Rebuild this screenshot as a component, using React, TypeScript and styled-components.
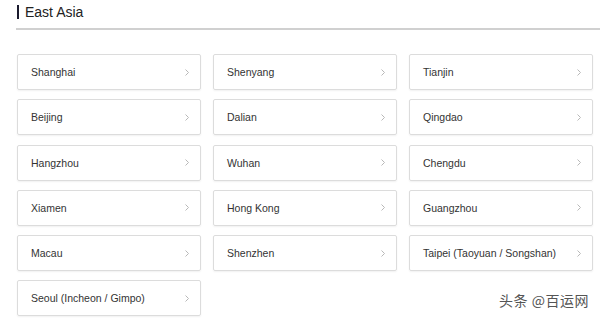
import React from "react";
import styled, { createGlobalStyle } from "styled-components";

const GlobalStyle = createGlobalStyle`
  html, body {
    margin: 0;
    padding: 0;
    background: #ffffff;
    font-family: "Liberation Sans", Arial, sans-serif;
  }
`;

const cities: string[] = [
  "Shanghai",
  "Shenyang",
  "Tianjin",
  "Beijing",
  "Dalian",
  "Qingdao",
  "Hangzhou",
  "Wuhan",
  "Chengdu",
  "Xiamen",
  "Hong Kong",
  "Guangzhou",
  "Macau",
  "Shenzhen",
  "Taipei (Taoyuan / Songshan)",
  "Seoul (Incheon / Gimpo)",
];

const Page = styled.div`
  position: relative;
  width: 600px;
  height: 321px;
  overflow: hidden;
  padding-left: 16px;
  box-sizing: border-box;
`;

const Header = styled.div`
  display: flex;
  align-items: center;
  height: 30px;
  border-bottom: 2px solid #d0d0d0;
  box-sizing: border-box;
`;

const TitleBar = styled.span`
  display: block;
  width: 2px;
  height: 14px;
  margin-left: 1px;
  margin-right: 6px;
  margin-top: -4px;
  background: #1a1a2e;
`;

const Title = styled.h2`
  margin: 0;
  margin-top: -5px;
  font-size: 14px;
  font-weight: normal;
  color: #222;
`;

const Grid = styled.div`
  display: grid;
  grid-template-columns: repeat(3, 184px);
  grid-auto-rows: 36px;
  column-gap: 12px;
  row-gap: 9.25px;
  margin-top: 24px;
  margin-left: 1px;
`;

const Card = styled.a`
  display: flex;
  align-items: center;
  justify-content: space-between;
  padding: 0 11px 0 13px;
  border: 1px solid #dcdcdc;
  border-radius: 2px;
  box-shadow: 0 1px 2px rgba(0, 0, 0, 0.06);
  box-sizing: border-box;
  color: #333;
  font-size: 10.5px;
  text-decoration: none;
`;

const Chevron = styled.svg`
  width: 4px;
  height: 7px;
  flex-shrink: 0;
`;

const Watermark = styled.div`
  position: absolute;
  right: 11px;
  bottom: 11px;
  font-family: "Noto Sans CJK SC", sans-serif;
  font-size: 14px;
  color: #555;
  text-shadow: 0 0 2px #fff, 0 0 2px #fff;
  letter-spacing: 0.5px;
`;

const App: React.FC = () => {
  return (
    <Page>
      <GlobalStyle />
      <Header>
        <TitleBar />
        <Title>East Asia</Title>
      </Header>
      <Grid>
        {cities.map((city) => (
          <Card key={city} href="#">
            <span>{city}</span>
            <Chevron viewBox="0 0 4 7">
              <polyline points="0.5,0.5 3.5,3.5 0.5,6.5" fill="none" stroke="#b8b8b8" strokeWidth="1" />
            </Chevron>
          </Card>
        ))}
      </Grid>
      <Watermark>头条 @百运网</Watermark>
    </Page>
  );
};

export default App;
